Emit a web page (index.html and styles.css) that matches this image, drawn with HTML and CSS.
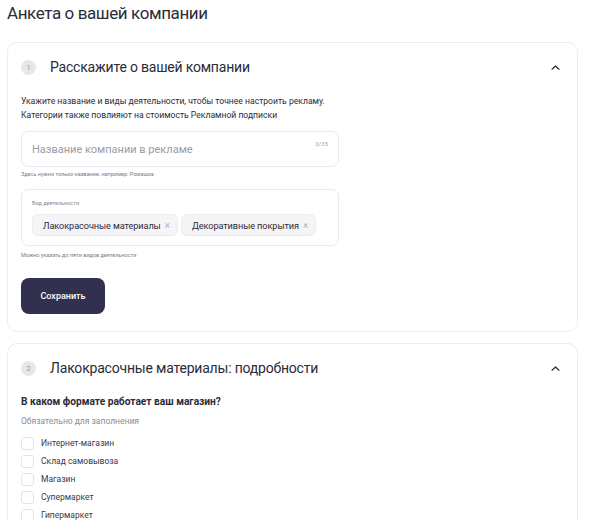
FILE: index.html
```html
<!DOCTYPE html>
<html lang="ru">
<head>
<meta charset="utf-8">
<link rel="stylesheet" href="styles.css">
</head>
<body>
<div class="page">
  <h1 class="title">Анкета о вашей компании</h1>

  <section class="card">
    <header class="card-head">
      <span class="step">1</span>
      <h2 class="card-title">Расскажите о вашей компании</h2>
      <svg class="chevron" viewBox="0 0 9 5" width="9" height="5"><path d="M1 4.2 L4.5 1 L8 4.2" fill="none" stroke="#2b2b3a" stroke-width="1.2" stroke-linecap="round" stroke-linejoin="round"/></svg>
    </header>
    <p class="desc">Укажите название и виды деятельности, чтобы точнее настроить рекламу.<br>Категории также повлияют на стоимость Рекламной подписки</p>

    <div class="field field-name">
      <span class="placeholder">Название компании в рекламе</span>
      <span class="counter">0/35</span>
    </div>
    <p class="hint hint-name">Здесь нужно только название, например: Ромашка</p>

    <div class="field field-tags">
      <span class="field-label">Вид деятельности</span>
      <div class="chips">
        <span class="chip">Лакокрасочные материалы <span class="x">×</span></span>
        <span class="chip">Декоративные покрытия <span class="x">×</span></span>
      </div>
    </div>
    <p class="hint hint-tags">Можно указать до пяти видов деятельности</p>

    <button class="btn">Сохранить</button>
  </section>

  <section class="card card2">
    <header class="card-head">
      <span class="step">2</span>
      <h2 class="card-title">Лакокрасочные материалы: подробности</h2>
      <svg class="chevron" viewBox="0 0 9 5" width="9" height="5"><path d="M1 4.2 L4.5 1 L8 4.2" fill="none" stroke="#2b2b3a" stroke-width="1.2" stroke-linecap="round" stroke-linejoin="round"/></svg>
    </header>
    <p class="question">В каком формате работает ваш магазин?</p>
    <p class="required">Обязательно для заполнения</p>
    <ul class="checks">
      <li><span class="box"></span>Интернет-магазин</li>
      <li><span class="box"></span>Склад самовывоза</li>
      <li><span class="box"></span>Магазин</li>
      <li><span class="box"></span>Супермаркет</li>
      <li><span class="box"></span>Гипермаркет</li>
    </ul>
  </section>
</div>
</body>
</html>
```

FILE: styles.css
```css
* { box-sizing: border-box; }
html, body { margin: 0; padding: 0; background: #fff; }
body {
  font-family: "Roboto", "Noto Sans", sans-serif;
  color: #2b2b3a;
  overflow: hidden;
  height: 520px;
}
.page { padding: 0 26px 0 7px; }
.title {
  margin: 0;
  padding-top: 2px;
  font-size: 17px;
  letter-spacing: -0.4px;
  line-height: 22px;
  font-weight: 400;
  color: #2b2b3a;
}
.card {
  margin-top: 18px;
  border: 1px solid #ececf1;
  border-radius: 10px;
  padding: 12px 13px 17px 13px;
  background: #fff;
}
.card2 { margin-top: 11px; padding-bottom: 0; border-bottom: none; border-radius: 10px 10px 0 0; }
.card-head {
  display: flex;
  align-items: center;
  height: 24px;
}
.step {
  width: 15px;
  height: 15px;
  border-radius: 50%;
  background: #e7e7ea;
  color: #9a9aa2;
  font-size: 8px;
  display: flex;
  align-items: center;
  justify-content: center;
}
.card-title {
  margin: 0 0 0 14px;
  font-size: 14px;
  letter-spacing: -0.2px;
  font-weight: 400;
  flex: 1;
  color: #2b2b3a;
}
.chevron { margin-right: 4px; }
.desc {
  margin: 15px 0 0;
  font-size: 8.6px;
  line-height: 14px;
  color: #2b2b3a;
}
.field {
  width: 318px;
  border: 1px solid #e9e9ee;
  border-radius: 7px;
  position: relative;
}
.field-name {
  margin-top: 9px;
  height: 36px;
  display: flex;
  align-items: center;
  padding-left: 10px;
}
.placeholder { font-size: 11px; color: #9b9ba6; }
.counter {
  position: absolute;
  right: 10px;
  top: 8px;
  font-size: 6px;
  color: #a9a9b2;
}
.hint {
  margin: 3px 0 0;
  font-size: 5.5px;
  line-height: 8px;
  color: #7c7c88;
}
.field-tags {
  margin-top: 11px;
  height: 57px;
  padding: 9px 10px 0 10px;
}
.field-label {
  display: block;
  font-size: 5.5px;
  line-height: 8px;
  color: #8a8a96;
}
.chips { display: flex; gap: 3px; margin-top: 7px; }
.chip {
  height: 22px;
  display: flex;
  align-items: center;
  white-space: nowrap;
  padding: 0 7px 0 10px;
  background: #f5f5f8;
  border: 1px solid #ebebf0;
  border-radius: 6px;
  font-size: 9.2px;
  letter-spacing: -0.1px;
  color: #2b2b3a;
}
.chip .x { color: #b4b4bc; margin-left: 4px; font-size: 10px; }
.hint-tags { margin-top: 5px; }
.btn {
  display: block;
  margin-top: 19px;
  width: 84px;
  height: 36px;
  border: none;
  border-radius: 8px;
  background: #31314f;
  color: #fff;
  font-family: inherit;
  font-size: 9px;
  font-weight: 500;
}
.question {
  margin: 15px 0 0;
  font-size: 10.2px;
  font-weight: 700;
  line-height: 14px;
}
.required {
  margin: 5px 0 0;
  font-size: 8.5px;
  line-height: 14px;
  color: #8c8c96;
}
.checks { list-style: none; margin: 6px 0 0; padding: 0; }
.checks li {
  display: flex;
  align-items: center;
  height: 18px;
  font-size: 8.5px;
  color: #3a3a48;
}
.box {
  width: 13px;
  height: 13px;
  border: 1px solid #e3e3e9;
  border-radius: 3px;
  margin-right: 7px;
}
```
